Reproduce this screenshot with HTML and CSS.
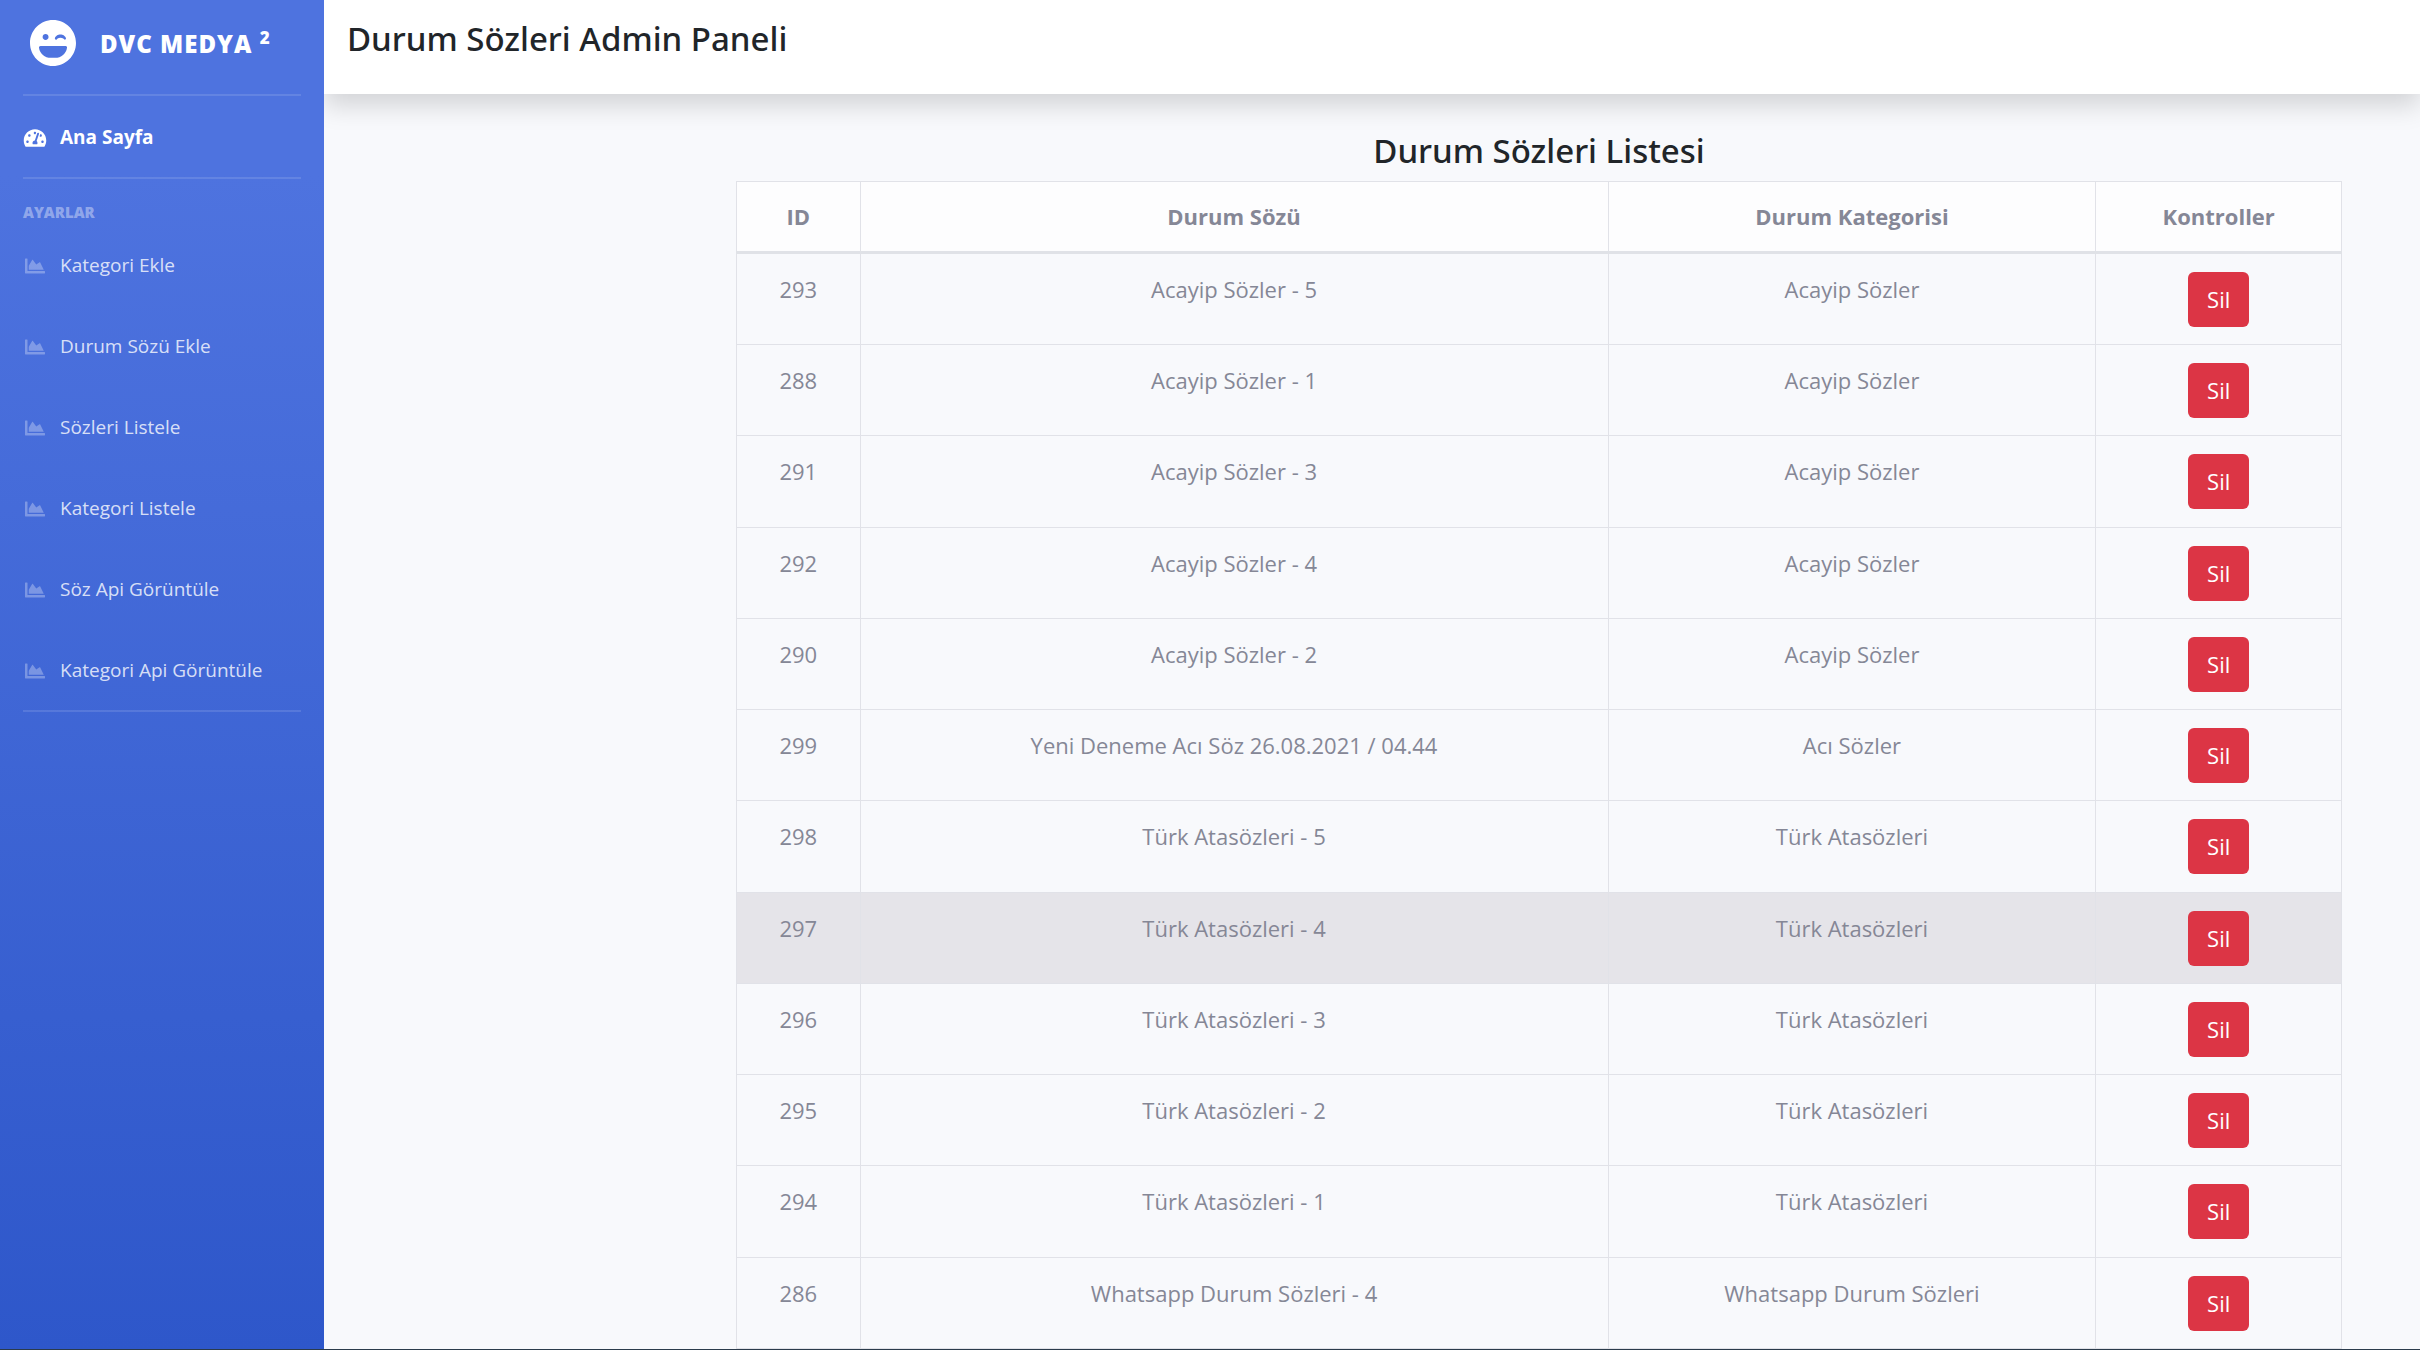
FILE: index.html
```html
<!DOCTYPE html>
<html lang="tr">
<head>
    <meta charset="UTF-8">
    <meta name="viewport" content="width=device-width, initial-scale=1.0">
    <title>Durum Sözleri Admin Paneli</title>
    <link rel="stylesheet" href="styles.css">
</head>
<body>
    <!-- İkonlar -->
    <svg class="icon-defs" aria-hidden="true">
        <symbol id="icon-laugh" viewBox="0 0 496 512">
            <path d="M248 8C111 8 0 119 0 256s111 248 248 248 248-111 248-248S385 8 248 8zm20.1 198.1c4-25.2 34.2-42.1 59.9-42.1s55.9 16.9 59.9 42.1c1.7 11.1-11.4 18.3-19.8 10.8l-9.5-8.5c-14.8-13.2-46.2-13.2-61 0L288 217c-8.4 7.4-21.6.3-19.9-10.9zM168 160c17.7 0 32 14.3 32 32s-14.3 32-32 32-32-14.3-32-32 14.3-32 32-32zm230.9 146C390.9 370.5 336 416 271 416h-46c-65 0-119.9-45.5-127.9-110-1.2-9.5 6.3-18 15.9-18h271c9.5 0 17.1 8.5 15.9 18z"/>
        </symbol>
        <symbol id="icon-dashboard" viewBox="0 0 576 512">
            <path d="M288 32C128.94 32 0 160.94 0 320c0 52.8 14.25 102.26 39.06 144.8 5.61 9.62 16.3 15.2 27.44 15.2h443c11.14 0 21.83-5.58 27.44-15.2C561.75 422.26 576 372.8 576 320c0-159.06-128.94-288-288-288zm0 64c14.71 0 26.58 10.13 30.32 23.65-1.11 2.26-2.64 4.23-3.45 6.67l-9.22 27.67c-5.13 3.49-10.97 6.01-17.64 6.01-17.67 0-32-14.33-32-32S270.33 96 288 96zM96 384c-17.67 0-32-14.33-32-32s14.33-32 32-32 32 14.33 32 32-14.33 32-32 32zm48-160c-17.67 0-32-14.33-32-32s14.33-32 32-32 32 14.33 32 32-14.33 32-32 32zm246.77-72.41l-61.33 184C343.13 347.33 352 364.54 352 384c0 11.72-3.38 22.55-8.88 32H232.88c-5.5-9.45-8.88-20.28-8.88-32 0-33.94 26.5-61.43 59.9-63.59l61.34-184.01c4.17-12.56 17.73-19.45 30.36-15.17 12.57 4.19 19.35 17.79 15.17 30.36zm14.66 57.2l15.52-46.55c3.47-1.29 7.13-2.23 11.05-2.23 17.67 0 32 14.33 32 32s-14.33 32-32 32c-11.38-.01-20.89-6.28-26.57-15.22zM480 384c-17.67 0-32-14.33-32-32s14.33-32 32-32 32 14.33 32 32-14.33 32-32 32z"/>
        </symbol>
        <symbol id="icon-chart" viewBox="0 0 512 512">
            <path d="M500 384c6.6 0 12 5.4 12 12v40c0 6.6-5.4 12-12 12H12c-6.6 0-12-5.4-12-12V76c0-6.6 5.4-12 12-12h40c6.6 0 12 5.4 12 12v308h436zM372.7 159.5L288 216l-85.3-113.7c-5.1-6.8-15.5-6.3-19.9 1L96 248v104h384l-89.9-187.8c-3.2-6.5-11.4-8.7-17.4-4.7z"/>
        </symbol>
    </svg>

    <div class="wrapper">
        <!-- Sol Menü -->
        <nav class="sidebar">
            <a class="brand" href="#">
                <svg class="brand-icon" aria-hidden="true"><use href="#icon-laugh"/></svg>
                <span>DVC MEDYA <sup>2</sup></span>
            </a>
            <hr class="divider">
            <a class="nav-link active" href="#">
                <svg class="nav-icon" aria-hidden="true"><use href="#icon-dashboard"/></svg>
                <span>Ana Sayfa</span>
            </a>
            <hr class="divider">
            <div class="sidebar-heading">AYARLAR</div>
            <a class="nav-link" href="#">
                <svg class="nav-icon" aria-hidden="true"><use href="#icon-chart"/></svg>
                <span>Kategori Ekle</span>
            </a>
            <a class="nav-link" href="#">
                <svg class="nav-icon" aria-hidden="true"><use href="#icon-chart"/></svg>
                <span>Durum Sözü Ekle</span>
            </a>
            <a class="nav-link" href="#">
                <svg class="nav-icon" aria-hidden="true"><use href="#icon-chart"/></svg>
                <span>Sözleri Listele</span>
            </a>
            <a class="nav-link" href="#">
                <svg class="nav-icon" aria-hidden="true"><use href="#icon-chart"/></svg>
                <span>Kategori Listele</span>
            </a>
            <a class="nav-link" href="#">
                <svg class="nav-icon" aria-hidden="true"><use href="#icon-chart"/></svg>
                <span>Söz Api Görüntüle</span>
            </a>
            <a class="nav-link" href="#">
                <svg class="nav-icon" aria-hidden="true"><use href="#icon-chart"/></svg>
                <span>Kategori Api Görüntüle</span>
            </a>
            <hr class="divider">
        </nav>

        <div class="content">
            <header class="topbar">
                <h1>Durum Sözleri Admin Paneli</h1>
            </header>

            <!-- Söz Listesi -->
            <main class="list">
                <h2 id="list-title">Durum Sözleri Listesi</h2>
                <div class="table-wrap">
                    <table class="table" aria-labelledby="list-title">
                        <thead>
                            <tr>
                                <th class="col-id">ID</th>
                                <th class="col-text">Durum Sözü</th>
                                <th class="col-category">Durum Kategorisi</th>
                                <th class="col-controls">Kontroller</th>
                            </tr>
                        </thead>
                        <tbody>
                            <tr><td>293</td><td>Acayip Sözler - 5</td><td>Acayip Sözler</td><td><button class="btn-danger" type="button">Sil</button></td></tr>
                            <tr><td>288</td><td>Acayip Sözler - 1</td><td>Acayip Sözler</td><td><button class="btn-danger" type="button">Sil</button></td></tr>
                            <tr><td>291</td><td>Acayip Sözler - 3</td><td>Acayip Sözler</td><td><button class="btn-danger" type="button">Sil</button></td></tr>
                            <tr><td>292</td><td>Acayip Sözler - 4</td><td>Acayip Sözler</td><td><button class="btn-danger" type="button">Sil</button></td></tr>
                            <tr><td>290</td><td>Acayip Sözler - 2</td><td>Acayip Sözler</td><td><button class="btn-danger" type="button">Sil</button></td></tr>
                            <tr><td>299</td><td>Yeni Deneme Acı Söz 26.08.2021 / 04.44</td><td>Acı Sözler</td><td><button class="btn-danger" type="button">Sil</button></td></tr>
                            <tr><td>298</td><td>Türk Atasözleri - 5</td><td>Türk Atasözleri</td><td><button class="btn-danger" type="button">Sil</button></td></tr>
                            <tr class="selected"><td>297</td><td>Türk Atasözleri - 4</td><td>Türk Atasözleri</td><td><button class="btn-danger" type="button">Sil</button></td></tr>
                            <tr><td>296</td><td>Türk Atasözleri - 3</td><td>Türk Atasözleri</td><td><button class="btn-danger" type="button">Sil</button></td></tr>
                            <tr><td>295</td><td>Türk Atasözleri - 2</td><td>Türk Atasözleri</td><td><button class="btn-danger" type="button">Sil</button></td></tr>
                            <tr><td>294</td><td>Türk Atasözleri - 1</td><td>Türk Atasözleri</td><td><button class="btn-danger" type="button">Sil</button></td></tr>
                            <tr><td>286</td><td>Whatsapp Durum Sözleri - 4</td><td>Whatsapp Durum Sözleri</td><td><button class="btn-danger" type="button">Sil</button></td></tr>
                        </tbody>
                    </table>
                </div>
            </main>
        </div>
    </div>
</body>
</html>
```
FILE: styles.css
```css
* {
    margin: 0;
    padding: 0;
    box-sizing: border-box;
}

body {
    font-family: 'Segoe UI', 'Open Sans', sans-serif;
    font-size: 22px;
    line-height: 35px;
    color: #858796;
    background-color: #f8f9fc;
}

a {
    text-decoration: none;
}

.icon-defs {
    display: none;
}

.wrapper {
    display: flex;
    min-height: 100vh;
    border-bottom: 1px solid #2b3b4b;
}

/* Sol menü */
.sidebar {
    position: relative;
    z-index: 1;
    flex: 0 0 324px;
    padding: 0 23px;
    background: linear-gradient(180deg, #4e73df 13%, #2e57ca 100%);
}

.brand {
    display: flex;
    align-items: center;
    gap: 24px;
    height: 94px;
    padding: 0 0 8px 7px;
    color: #fff;
    font-size: 24px;
    font-weight: 800;
    letter-spacing: 1px;
    white-space: nowrap;
}

.brand sup {
    font-size: 17px;
    line-height: 0;
}

.brand-icon {
    width: 46px;
    height: 48px;
    fill: #fff;
}

.divider {
    border: 0;
    border-top: 2px solid rgba(255, 255, 255, 0.12);
}

.sidebar-heading {
    margin-top: 22px;
    color: rgba(255, 255, 255, 0.4);
    font-size: 15px;
    font-weight: 800;
    line-height: 23px;
}

.nav-link {
    display: flex;
    align-items: center;
    gap: 13px;
    height: 81px;
    padding-top: 2px;
    color: rgba(255, 255, 255, 0.8);
    font-size: 19px;
}

.nav-link.active {
    color: #fff;
    font-weight: 700;
}

.nav-icon {
    width: 24px;
    height: 20px;
    fill: rgba(255, 255, 255, 0.3);
}

.nav-link.active .nav-icon {
    fill: #fff;
}

/* İçerik */
.content {
    flex: 1;
    display: flex;
    flex-direction: column;
}

.topbar {
    height: 94px;
    padding: 18px 23px;
    background-color: #fff;
    box-shadow: 0 12px 24px rgba(0, 0, 0, 0.15);
}

h1,
h2 {
    color: #212529;
    font-family: 'Segoe UI', 'Noto Sans', sans-serif;
    font-size: 33px;
    font-weight: 500;
    line-height: 42px;
}

.list {
    flex: 1;
    display: flex;
    flex-direction: column;
    gap: 9px;
    padding: 36px 78px 0 412px;
    text-align: center;
}

.table-wrap {
    flex: 1;
    display: grid;
}

.table {
    width: 100%;
    height: 100%;
    table-layout: fixed;
    border-collapse: collapse;
}

.table th,
.table td {
    padding: 18px 18px 17px;
    border: 1px solid #e1e2e8;
    vertical-align: top;
}

.table th {
    padding: 17px 18px;
    border-bottom: 3px solid #e0e2e7;
    background-color: #fdfdfe;
    font-weight: 700;
}

.col-id {
    width: 7.7%;
}

.col-text {
    width: 46.6%;
}

.col-category {
    width: 30.4%;
}

.col-controls {
    width: 15.3%;
}

.table tbody tr:hover,
.table .selected {
    background-color: #e5e4e9;
}

.btn-danger {
    display: block;
    height: 55px;
    margin: 0 auto;
    padding: 0 19px;
    border: 0;
    border-radius: 6px;
    background-color: #dc3545;
    color: #fff;
    font: inherit;
    cursor: pointer;
}
```
